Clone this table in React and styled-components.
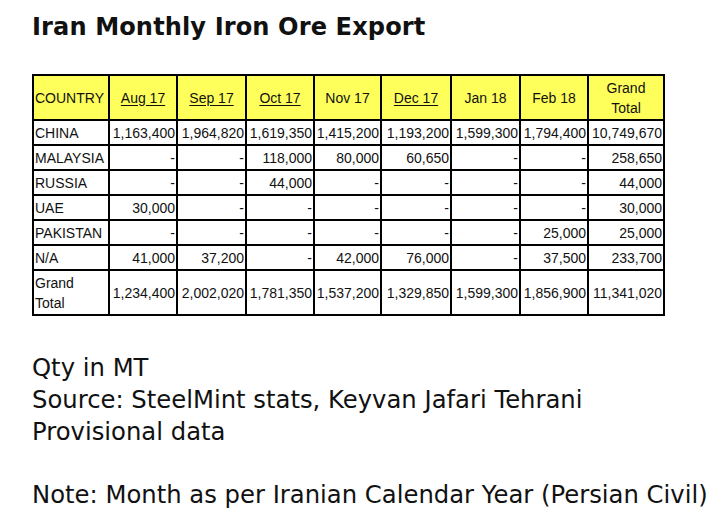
import React from "react";
import styled, { createGlobalStyle } from "styled-components";

const Global = createGlobalStyle`
  html, body { margin: 0; padding: 0; background: #fff; }
  body { width: 724px; height: 523px; overflow: hidden; }
`;

const Page = styled.div`
  padding: 12px 0 0 32px;
  color: #111;
`;

const Title = styled.h1`
  margin: 0;
  font-family: "DejaVu Sans", Verdana, sans-serif;
  font-weight: bold;
  font-size: 24.1px;
  line-height: 30px;
  letter-spacing: 0.1px;
`;

const Table = styled.table`
  margin-top: 32px;
  border-collapse: collapse;
  table-layout: fixed;
  width: 631px;
  font-family: "Liberation Sans", Arial, sans-serif;
  font-size: 14px;
  color: #111;
`;

const Row = styled.tr`
  height: ${(p) => p.$h}px;
`;

const Head = styled.th`
  background: #ffff5c;
  border: 2px solid #000;
  font-weight: normal;
  text-align: ${(p) => (p.$left ? "left" : "center")};
  padding: 0 ${(p) => (p.$left ? "1px" : "2px")};
  line-height: 20px;
  white-space: ${(p) => (p.$wrap ? "normal" : "nowrap")};
`;

const Link = styled.span`
  text-decoration: underline;
  text-underline-offset: 2px;
`;

const Label = styled.td`
  border: 2px solid #000;
  padding: 0 1px;
  text-align: left;
  white-space: ${(p) => (p.$wrap ? "normal" : "nowrap")};
  line-height: 20px;
`;

const Num = styled.td`
  border: 2px solid #000;
  padding: 0 1px 0 0;
  text-align: right;
  white-space: nowrap;
`;

const Notes = styled.div`
  margin-top: 36px;
  font-family: "DejaVu Sans", Verdana, sans-serif;
  font-size: 24.3px;
  line-height: 32px;
  color: #111;
`;

const Line = styled.div`
  margin-top: ${(p) => (p.$gap ? "31px" : "0")};
  white-space: nowrap;
`;

const cols = [76, 68, 69, 68, 67, 70, 69, 68, 76];

const headers = [
  { t: "Aug 17", link: true },
  { t: "Sep 17", link: true },
  { t: "Oct 17", link: true },
  { t: "Nov 17" },
  { t: "Dec 17", link: true },
  { t: "Jan 18" },
  { t: "Feb 18" },
];

const rows = [
  ["CHINA", "1,163,400", "1,964,820", "1,619,350", "1,415,200", "1,193,200", "1,599,300", "1,794,400", "10,749,670"],
  ["MALAYSIA", "-", "-", "118,000", "80,000", "60,650", "-", "-", "258,650"],
  ["RUSSIA", "-", "-", "44,000", "-", "-", "-", "-", "44,000"],
  ["UAE", "30,000", "-", "-", "-", "-", "-", "-", "30,000"],
  ["PAKISTAN", "-", "-", "-", "-", "-", "-", "25,000", "25,000"],
  ["N/A", "41,000", "37,200", "-", "42,000", "76,000", "-", "37,500", "233,700"],
];

const total = ["1,234,400", "2,002,020", "1,781,350", "1,537,200", "1,329,850", "1,599,300", "1,856,900", "11,341,020"];

export default function App() {
  return (
    <>
      <Global />
      <Page>
        <Title>Iran Monthly Iron Ore Export</Title>
        <Table>
          <colgroup>
            {cols.map((w, i) => (
              <col key={i} style={{ width: w }} />
            ))}
          </colgroup>
          <thead>
            <Row $h={45}>
              <Head $left>COUNTRY</Head>
              {headers.map((h) => (
                <Head key={h.t}>{h.link ? <Link>{h.t}</Link> : h.t}</Head>
              ))}
              <Head $wrap>Grand Total</Head>
            </Row>
          </thead>
          <tbody>
            {rows.map((r) => (
              <Row $h={25} key={r[0]}>
                <Label>{r[0]}</Label>
                {r.slice(1).map((v, i) => (
                  <Num key={i}>{v}</Num>
                ))}
              </Row>
            ))}
            <Row $h={45}>
              <Label $wrap>Grand Total</Label>
              {total.map((v, i) => (
                <Num key={i}>{v}</Num>
              ))}
            </Row>
          </tbody>
        </Table>
        <Notes>
          <Line>Qty in MT</Line>
          <Line>Source: SteelMint stats, Keyvan Jafari Tehrani</Line>
          <Line>Provisional data</Line>
          <Line $gap>Note: Month as per Iranian Calendar Year (Persian Civil)</Line>
        </Notes>
      </Page>
    </>
  );
}
